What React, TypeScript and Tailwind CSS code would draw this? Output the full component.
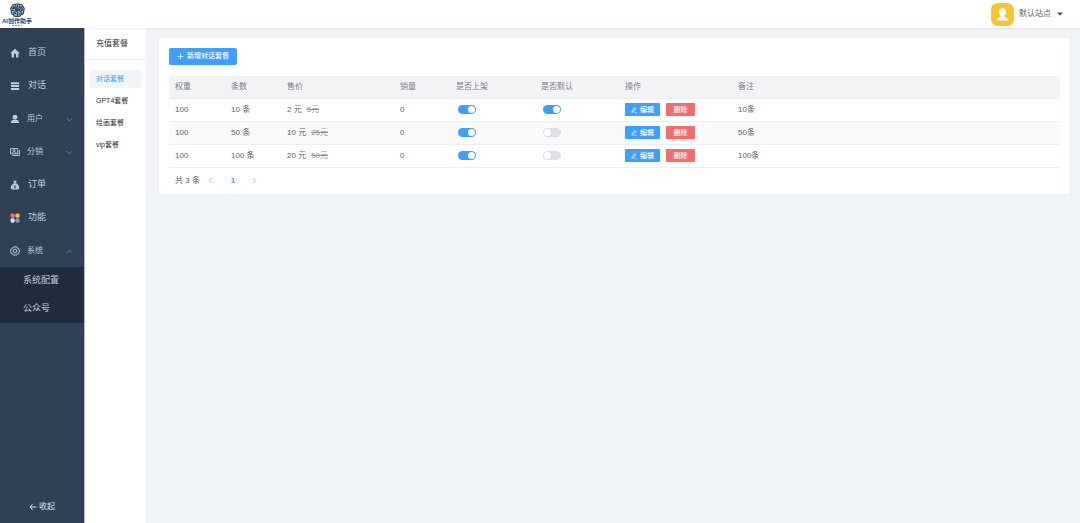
import { useState, type ReactNode } from 'react';
import clsx from 'clsx';

type MenuItem = {
  label: string;
  icon: ReactNode;
  small?: boolean;
  open?: boolean;
  children?: string[];
};

const HomeIcon = () => (
  <svg viewBox="0 0 16 16" className="size-[10px]" fill="currentColor">
    <path d="M8 1.200 1.200 7.400v1.400h1.400V15h3.900v-4.600c0-.9.6-1.500 1.500-1.500s1.500.6 1.500 1.500V15h3.900V8.800h1.400V7.400z" />
  </svg>
);

const RowsIcon = () => (
  <svg viewBox="0 0 16 16" className="size-[10px]" fill="currentColor">
    <path d="M1.500 2h13v3.200h-13zM1.500 6.500h13v3.200h-13zM1.500 11h13v3.200h-13z" />
  </svg>
);

const UserIcon = () => (
  <svg viewBox="0 0 16 16" className="size-[10px]" fill="currentColor">
    <circle cx="8" cy="5" r="3.800" />
    <path d="M1.500 14.500c0-3.600 1.800-5.200 4.600-5.200h3.800c2.800 0 4.600 1.600 4.600 5.200z" />
  </svg>
);

const ShareIcon = () => (
  <svg viewBox="0 0 16 16" className="size-[10px]" fill="none" stroke="currentColor" strokeWidth="1.500">
    <path d="M1 2.500h11.500v8.500H1z" />
    <path d="M3.500 13.500H15V5" />
    <circle cx="6.700" cy="5.700" r="1.600" />
    <path d="M3.500 10.500c.4-2 1.500-2.800 3.200-2.800s2.900.8 3.300 2.800" />
  </svg>
);

const OrderIcon = () => (
  <svg viewBox="0 0 16 16" className="size-[10px]">
    <path
      d="M5.400 1.200h5.200L9.600 4.600h-3.200zM5.800 5.300h4.400c2.800 2 4.600 4.500 4.600 6.700 0 2.200-1.400 3.200-3.600 3.200H4.800c-2.200 0-3.600-1-3.600-3.200 0-2.200 1.800-4.700 4.600-6.700z"
      fill="currentColor"
    />
    <path d="m6 8 2 2.200L10 8M8 10.200v3.600M6 11.600h4" stroke="#304156" strokeWidth="1" fill="none" />
  </svg>
);

const FeatureIcon = () => (
  <svg viewBox="0 0 16 16" className="size-[10px]">
    <path d="M.5 4C.5 1 3.200.2 5 1.700c1.500-.9 2.500.2 2.500 2v3.800h-4C1.600 7.500.5 6.200.5 4z" fill="#f56c6c" />
    <rect x="8.500" y=".8" width="7" height="6.700" rx="2.600" fill="#fbc02d" />
    <rect x=".8" y="8.500" width="6.700" height="7" rx="2.600" fill="#dfe5ec" />
    <rect x="8.500" y="8.500" width="7" height="7" rx="2.600" fill="#7f9bb3" />
  </svg>
);

const SettingIcon = () => (
  <svg viewBox="0 0 16 16" className="size-[10px]" fill="none" stroke="currentColor" strokeWidth="1.600">
    <path d="M5.200 1.500h5.600l1 2 2.200.8 1.200 3.700-1.200 3.700-2.200.8-1 2H5.200l-1-2-2.200-.8L.8 8 2 4.300l2.200-.8z" />
    <circle cx="8" cy="8" r="3" />
  </svg>
);

const Chevron = ({ className }: { className?: string }) => (
  <svg viewBox="0 0 8 8" className={className} fill="none" stroke="currentColor" strokeWidth="1">
    <path d="m1 2.500 3 3 3-3" />
  </svg>
);

const menu: MenuItem[] = [
  { label: '首页', icon: <HomeIcon /> },
  { label: '对话', icon: <RowsIcon /> },
  { label: '用户', icon: <UserIcon />, small: true, children: [] },
  { label: '分销', icon: <ShareIcon />, small: true, children: [] },
  { label: '订单', icon: <OrderIcon /> },
  { label: '功能', icon: <FeatureIcon /> },
  { label: '系统', icon: <SettingIcon />, small: true, open: true, children: ['系统配置', '公众号'] },
];

const packages = ['对话套餐', 'GPT4套餐', '绘画套餐', 'vip套餐'];

const rows = [
  { weight: 100, count: 10, price: 2, origin: 5, sales: 0, onSale: true, isDefault: true },
  { weight: 100, count: 50, price: 10, origin: 25, sales: 0, onSale: true, isDefault: false },
  { weight: 100, count: 100, price: 20, origin: 50, sales: 0, onSale: true, isDefault: false },
];

function Logo() {
  return (
    <a href="#" className="flex flex-col items-center text-[#2c4763]">
      <svg viewBox="0 0 32 32" className="size-[15px]" fill="none" stroke="currentColor" strokeWidth="2.400">
        <path
          d="M12 3c3-2 5-2 8 0 4-1 7 1 8 5 3 3 3 6 1 9 1 4-1 7-5 8-2 4-6 5-8 3-3 2-7 1-9-3-4-1-5-4-4-8-2-3-1-7 1-9 1-4 4-6 8-5z"
          fill="#9fb0c2"
        />
        <path d="M16 3v6l-4 3v4l4 3v9M20 5v5l4 3h4M12 5v4l-4 3H4M9 16H4M8 25v-4l4-3M24 25v-5l-4-3v-4M23 16h5M12 24v-3M20 26v-4" />
        <circle cx="16" cy="14" r="2" fill="currentColor" />
        <circle cx="8" cy="9" r="1" />
        <circle cx="24" cy="9" r="1" />
      </svg>
      <span className="text-[6px] leading-[6px] font-bold whitespace-nowrap">AI创作助手</span>
      <svg viewBox="0 0 10 1" className="mt-px h-px w-[10px]" stroke="currentColor" strokeOpacity=".6">
        <path d="M0 .5h10" strokeDasharray="2 1" />
      </svg>
    </a>
  );
}

function Header() {
  return (
    <header className="z-10 flex h-7 shrink-0 items-center justify-between bg-white pr-4 pl-[2px] shadow-[0_1px_2px_rgba(0,21,41,0.06)]">
      <Logo />
      <button type="button" className="flex items-center text-[8px] text-[#606266]">
        <svg viewBox="0 0 24 24" className="size-[23px]">
          <rect width="24" height="24" rx="7" fill="#f7c437" />
          <path
            d="M12 5.500c2.300 0 3.700 1.600 3.700 3.800 0 1.700-.7 3.100-1.700 3.900v1.200c1.800.7 3.700 1.300 4 3.800H6c.3-2.500 2.200-3.100 4-3.800v-1.200c-1-.8-1.700-2.200-1.700-3.900 0-2.200 1.400-3.800 3.700-3.800z"
            fill="#fff"
          />
        </svg>
        <span className="ml-[5px]">默认站点</span>
        <svg viewBox="0 0 8 8" className="ml-[5px] size-2" fill="#4b4f57">
          <path d="M1.200 2.500h5.600L4 5.700z" />
        </svg>
      </button>
    </header>
  );
}

function Sidebar() {
  return (
    <aside className="flex w-[84px] shrink-0 flex-col bg-[#304156] text-[#bfcbd9]">
      <nav className="flex-1 pt-2">
        {menu.map((item) => (
          <div key={item.label}>
            <a
              href="#"
              className={clsx(
                'flex h-[33px] items-center pt-px pr-[11px] pl-[10px]',
                item.small ? 'gap-[7px] text-[8px]' : 'gap-2 text-[9px]',
              )}
            >
              {item.icon}
              <span className="flex-1">{item.label}</span>
              {item.children && (
                <Chevron className={clsx('size-[7px] opacity-50', item.open && 'rotate-180')} />
              )}
            </a>
            {item.open && (
              <div className="bg-[#1f2d3d]">
                {item.children?.map((child) => (
                  <a key={child} href="#" className="flex h-7 items-center pl-[23px] text-[9px]">
                    {child}
                  </a>
                ))}
              </div>
            )}
          </div>
        ))}
      </nav>
      <button type="button" className="flex h-8 items-center justify-center gap-[2px] text-[8px] text-[#dfe5ec]">
        <svg viewBox="0 0 8 8" className="size-2" fill="none" stroke="currentColor" strokeWidth="1">
          <path d="M7.500 4H1M3.700 1.200.9 4l2.800 2.800" />
        </svg>
        收起
      </button>
    </aside>
  );
}

function PackageNav() {
  return (
    <aside className="w-[62px] shrink-0 border-l border-[#b4bac2] bg-white">
      <p className="flex h-8 items-center border-b border-[#ebeef5] pt-px pl-[11px] text-[8px] text-[#303133]">
        充值套餐
      </p>
      <nav className="flex flex-col gap-1 px-[5px] pt-[10px]">
        {packages.map((name, i) => (
          <a
            key={name}
            href="#"
            className={clsx(
              'flex h-[18px] items-center rounded-xs pl-[6px] text-[7px]',
              i === 0 ? 'bg-[#f0f4f8] text-[#409eff]' : 'text-[#303133]',
            )}
          >
            {name}
          </a>
        ))}
      </nav>
    </aside>
  );
}

function Switch({ label, defaultOn }: { label: string; defaultOn: boolean }) {
  const [on, setOn] = useState(defaultOn);
  return (
    <input
      type="checkbox"
      role="switch"
      aria-label={label}
      checked={on}
      onChange={(e) => setOn(e.target.checked)}
      className="ml-[2px] flex h-[9px] w-[18px] appearance-none items-center rounded-full bg-[#dcdfe6] px-px before:size-[7px] before:rounded-full before:bg-white checked:justify-end checked:bg-[#409eff]"
    />
  );
}

function PackageTable() {
  return (
    <table className="w-full table-fixed border-collapse text-left text-[8px] leading-3 text-[#606266]">
      <colgroup>
        <col className="w-[56px]" />
        <col className="w-[56px]" />
        <col className="w-[113px]" />
        <col className="w-[56px]" />
        <col className="w-[85px]" />
        <col className="w-[84px]" />
        <col className="w-[113px]" />
        <col />
      </colgroup>
      <thead>
        <tr className="h-[22px] border-b border-[#ebeef5] bg-[#f2f3f5] text-[#7d8086]">
          {['权重', '条数', '售价', '销量', '是否上架', '是否默认', '操作', '备注'].map((title) => (
            <th key={title} className="px-[6px] font-normal">
              {title}
            </th>
          ))}
        </tr>
      </thead>
      <tbody>
        {rows.map((row) => (
          <tr key={row.count} className="h-[23px] border-b border-[#ebeef5] even:bg-[#fafafa]">
            <td className="px-[6px]">{row.weight}</td>
            <td className="px-[6px]">{row.count} 条</td>
            <td className="px-[6px]">
              {row.price} 元<s className="ml-[5px] text-[#909399]">{row.origin}元</s>
            </td>
            <td className="px-[6px]">{row.sales}</td>
            <td className="px-[6px]">
              <Switch label="是否上架" defaultOn={row.onSale} />
            </td>
            <td className="px-[6px]">
              <Switch label="是否默认" defaultOn={row.isDefault} />
            </td>
            <td className="px-[6px]">
              <div className="flex gap-[6px] text-[7px] font-medium text-white">
                <button
                  type="button"
                  className="flex h-[13px] w-[35px] items-center justify-center gap-[3px] rounded-[1px] bg-[#409eff]"
                >
                  <svg viewBox="0 0 8 8" className="size-[6px]" fill="none" stroke="currentColor" strokeWidth="1">
                    <path d="M5 .8 6.600 2 3 6.500l-1.800.6.200-1.900zM4.500 7.500h3" />
                  </svg>
                  编辑
                </button>
                <button
                  type="button"
                  className="flex h-[13px] w-[29px] items-center justify-center rounded-[1px] bg-[#f56c6c]"
                >
                  删除
                </button>
              </div>
            </td>
            <td className="px-[6px]">{row.count}条</td>
          </tr>
        ))}
      </tbody>
    </table>
  );
}

function Pagination() {
  return (
    <div className="flex h-[26px] items-center pl-[6px] text-[8px] text-[#606266]">
      <span>共 3 条</span>
      <button type="button" aria-label="上一页" className="flex w-[22px] justify-center text-[#a8abb2]">
        <Chevron className="size-[7px] rotate-90" />
      </button>
      <button type="button" className="w-[22px] font-bold text-[#409eff]">
        1
      </button>
      <button type="button" aria-label="下一页" className="flex w-[22px] justify-center text-[#a8abb2]">
        <Chevron className="size-[7px] -rotate-90" />
      </button>
    </div>
  );
}

export default function App() {
  return (
    <div className="flex min-h-screen flex-col bg-[#f0f4f8] font-['Liberation_Sans','Noto_Sans_CJK_SC',sans-serif]">
      <Header />
      <div className="flex flex-1">
        <Sidebar />
        <PackageNav />
        <main className="min-w-0 flex-1 pt-[9px] pr-[9px] pl-3">
          <section className="border border-[#ebeef5] bg-white px-[10px] pt-[10px]">
            <button
              type="button"
              className="mb-[11px] flex h-[17px] w-[68px] items-center justify-center gap-[3px] rounded-[2px] bg-[#409eff] text-[7px] font-medium whitespace-nowrap text-white"
            >
              <svg viewBox="0 0 8 8" className="size-[7px]" fill="none" stroke="currentColor" strokeWidth="1">
                <path d="M4 .8v6.400M.8 4h6.400" />
              </svg>
              新增对话套餐
            </button>
            <PackageTable />
            <Pagination />
          </section>
        </main>
      </div>
    </div>
  );
}
